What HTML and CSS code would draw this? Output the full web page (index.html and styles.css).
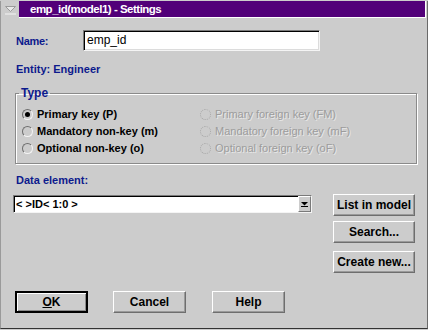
FILE: index.html
```html
<!DOCTYPE html>
<html>
<head>
<meta charset="utf-8">
<link rel="stylesheet" href="styles.css">
</head>
<body>
<div class="window">
  <div class="titlerow">
    <div class="sysmenu">
      <svg width="12" height="9" viewBox="0 0 12 9">
        <path d="M0.5 0.5 H10.5 L5.5 5.5 Z" fill="#e8e8e8" stroke="#9a9a9a" stroke-width="1"/>
        <line x1="0" y1="8" x2="11" y2="8" stroke="#f4f4f4" stroke-width="1"/>
      </svg>
    </div>
    <div class="titlebar">emp_id(model1) - Settings</div>
  </div>
  <div class="content">
    <div class="name-row">
      <span class="lbl name-lbl">Name:</span>
      <div class="textbox">emp_id</div>
    </div>
    <div class="lbl entity">Entity: Engineer</div>
    <fieldset class="group">
      <legend class="lbl">Type</legend>
      <div class="radios">
        <div class="radio"><span class="circle on"></span>Primary key (P)</div>
        <div class="radio"><span class="circle"></span>Mandatory non-key (m)</div>
        <div class="radio"><span class="circle"></span>Optional non-key (o)</div>
        <div class="radio disabled"><span class="circle"></span>Primary foreign key (FM)</div>
        <div class="radio disabled"><span class="circle"></span>Mandatory foreign key (mF)</div>
        <div class="radio disabled"><span class="circle"></span>Optional foreign key (oF)</div>
      </div>
    </fieldset>
    <div class="lbl data-lbl">Data element:</div>
    <div class="data-row">
      <div class="combo">
        <span class="combo-text">&lt; &gt;ID&lt; 1:0 &gt;</span>
        <span class="drop"><svg width="7" height="5" viewBox="0 0 7 5"><path d="M0 0 H7 L3.5 3.5 Z" fill="#000"/><rect x="0" y="4" width="7" height="1" fill="#000"/></svg></span>
      </div>
      <div class="side-buttons">
        <div class="btn side">List in model</div>
        <div class="btn side search">Search...</div>
        <div class="btn side create">Create new...</div>
      </div>
    </div>
    <div class="bottom-buttons">
      <div class="btn main default"><span class="u">O</span>K</div>
      <div class="btn main">Cancel</div>
      <div class="btn main help">Help</div>
    </div>
  </div>
</div>
</body>
</html>
```

FILE: styles.css
```css
html, body {
  margin: 0;
  padding: 0;
  background: #cccccc;
}
body {
  font-family: "Liberation Sans", Arial, sans-serif;
  font-size: 11px;
  font-weight: bold;
  color: #000;
}
.window {
  width: 428px;
  height: 328px;
  box-sizing: border-box;
  border-left: 1px solid #9a9a9a;
  border-right: 1px solid #6a6a6a;
  border-bottom: 1px solid #333;
  background: #cccccc;
}
.titlerow {
  display: flex;
  margin-top: 1px;
  height: 17px;
}
.sysmenu {
  width: 18px;
  display: flex;
  align-items: flex-start;
  justify-content: center;
  padding-top: 5px;
  box-sizing: border-box;
  padding-left: 2px;
}
.titlebar {
  flex: 1;
  margin-right: 1px;
  background: #520079;
  color: #fff;
  font-size: 11.5px;
  line-height: 16px;
  padding-left: 11px;
  letter-spacing: -0.5px;
  border-right: 1px solid #fff;
  border-bottom: 1px solid #fff;
}
.content {
  padding-left: 14px;
}
.lbl {
  color: #0c1a8c;
  line-height: 14px;
}
.name-row {
  display: flex;
  align-items: center;
  margin-top: 12px;
}
.name-lbl {
  width: 67px;
  padding-left: 1px;
  letter-spacing: -0.3px;
}
.textbox {
  width: 237px;
  height: 21px;
  box-sizing: border-box;
  background: #fff;
  border-top: 1px solid #7a7a7a;
  border-left: 1px solid #7a7a7a;
  border-right: 1px solid #f4f4f4;
  border-bottom: 1px solid #f4f4f4;
  box-shadow: inset 1px 1px 0 #000, inset -1px -1px 0 #dcdcdc;
  font-weight: normal;
  font-size: 12px;
  line-height: 19px;
  padding-left: 3px;
}
.entity {
  margin-top: 11px;
  padding-left: 1px;
}
.group {
  margin: 10px 0 0 0;
  padding: 0;
  width: 402px;
  box-sizing: border-box;
  border: 1px solid #8a8a8a;
  box-shadow: 1px 1px 0 #fff, inset 1px 1px 0 #fff;
}
.group legend {
  margin-left: 3px;
  padding: 0 2px;
  font-size: 12px;
}
.radios {
  display: grid;
  grid-template-columns: 178px 1fr;
  grid-template-rows: repeat(3, 17px);
  grid-auto-flow: column;
  padding: 6px 0 6px 6px;
}
.radio {
  display: flex;
  align-items: center;
  gap: 4px;
  line-height: 17px;
}
.circle {
  width: 11px;
  height: 11px;
  box-sizing: border-box;
  border-radius: 50%;
  border: 1px solid;
  border-color: #6e6e6e #f4f4f4 #f4f4f4 #6e6e6e;
  background: #cccccc;
  position: relative;
}
.circle.on::after {
  content: "";
  position: absolute;
  left: 2px;
  top: 2px;
  width: 5px;
  height: 5px;
  border-radius: 50%;
  background: #000;
}
.radio.disabled {
  color: #9c9c9c;
  text-shadow: 1px 1px 0 #e8e8e8;
  font-weight: normal;
}
.radio.disabled .circle {
  border: 1px dotted #a8a8a8;
}
.data-lbl {
  margin-top: 9px;
  padding-left: 1px;
}
.data-row {
  display: flex;
  align-items: flex-start;
  margin-top: 7px;
}
.combo {
  margin-top: 1px;
  margin-left: -2px;
  width: 299px;
  height: 18px;
  box-sizing: border-box;
  background: #fff;
  border-top: 1px solid #7a7a7a;
  border-left: 1px solid #7a7a7a;
  border-right: 1px solid #f4f4f4;
  border-bottom: 1px solid #f4f4f4;
  box-shadow: inset 1px 1px 0 #000;
  display: flex;
  align-items: stretch;
}
.combo-text {
  flex: 1;
  line-height: 16px;
  padding-left: 2px;
  font-size: 11px;
}
.drop {
  width: 13px;
  background: #cccccc;
  box-sizing: border-box;
  border-left: 1px solid #fff;
  border-top: 1px solid #fff;
  border-right: 1px solid #7a7a7a;
  border-bottom: 1px solid #7a7a7a;
  display: flex;
  align-items: center;
  justify-content: center;
}
.side-buttons {
  margin-left: 21px;
  display: flex;
  flex-direction: column;
}
.btn {
  box-sizing: border-box;
  background: #cccccc;
  border-top: 1px solid #fff;
  border-left: 1px solid #fff;
  border-right: 1px solid #6e6e6e;
  border-bottom: 1px solid #6e6e6e;
  box-shadow: inset -1px -1px 0 #9a9a9a;
  text-align: center;
  font-size: 12px;
  color: #000;
}
.side {
  width: 82px;
  height: 22px;
  line-height: 20px;
}
.search {
  margin-top: 5px;
}
.create {
  margin-top: 8px;
}
.bottom-buttons {
  display: flex;
  margin-top: 18px;
  gap: 25px;
}
.main {
  width: 73px;
  height: 22px;
  line-height: 20px;
}
.main.help {
  margin-left: 1px;
}
.main.default {
  border: 2px solid #000;
  box-shadow: inset 1px 1px 0 #fff, inset -1px -1px 0 #8a8a8a;
  line-height: 18px;
}
.u {
  text-decoration: underline;
}
```
